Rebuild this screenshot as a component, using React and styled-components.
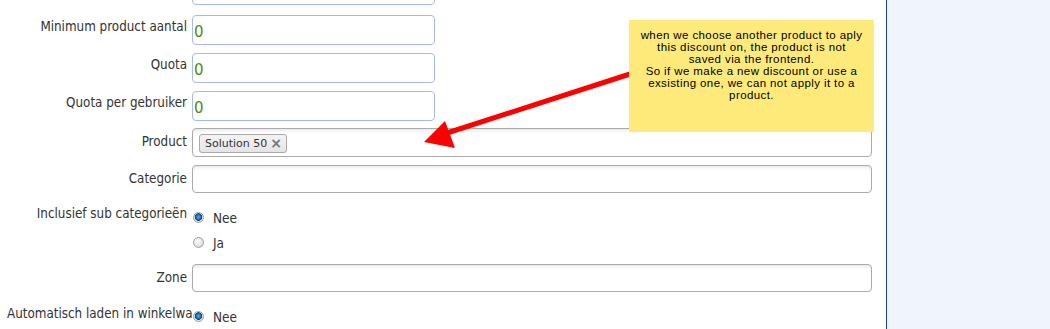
import React from "react";
import styled, { createGlobalStyle } from "styled-components";

const GlobalStyle = createGlobalStyle`
  html, body {
    margin: 0;
    padding: 0;
    background: #f0f4fd;
    overflow: hidden;
  }
  body {
    font-family: "DejaVu Sans Condensed", "DejaVu Sans", sans-serif;
  }
`;

const Page = styled.div`
  display: flex;
  width: 1050px;
  height: 329px;
  overflow: hidden;
  position: relative;
`;

const Main = styled.main`
  width: 886px;
  background: #fff;
  padding-left: 7px;
  box-sizing: border-box;
`;

const Side = styled.aside`
  flex: 1;
  border-left: 1px solid #1c3d99;
  background: #f0f4fd;
`;

const Form = styled.div`
  margin-top: -25px;
`;

const Row = styled.div`
  display: flex;
  align-items: flex-start;
  margin-bottom: ${(p) => p.$gap || 8}px;
`;

const Label = styled.label`
  width: 185px;
  flex: none;
  box-sizing: border-box;
  padding: ${(p) => p.$top || 4}px 5px 0 0;
  text-align: right;
  font-size: 13.3px;
  color: #333;
  white-space: nowrap;
  overflow: hidden;
`;

const Input = styled.div`
  box-sizing: border-box;
  width: ${(p) => (p.$short ? 243 : 680)}px;
  height: ${(p) => p.$h || 28}px;
  border: 1px solid ${(p) => (p.$short ? "#a8b9f0" : "#ababab")};
  border-radius: 4px;
  background: #fff;
  box-shadow: ${(p) => (p.$short ? "none" : "inset 0 3px 4px -2px rgba(0,0,0,0.12)")};
  display: flex;
  align-items: center;
  padding: 4px 5px 0 1px;
  font-family: "DejaVu Sans", sans-serif;
  font-size: 15px;
  color: #4f8a10;
`;

const Tag = styled.span`
  display: inline-flex;
  align-items: center;
  gap: 3px;
  margin: -3px 0 0 5px;
  height: 19px;
  padding: 0 4px 0 5px;
  box-sizing: border-box;
  border: 1px solid #aaa;
  border-radius: 3px;
  background: linear-gradient(#f4f4f4, #e4e4e4);
  font-size: 11px;
  color: #333;
`;

const Close = styled.span`
  font-size: 14px;
  font-weight: bold;
  color: #777;
`;

const Options = styled.div`
  display: flex;
  flex-direction: column;
  padding-top: ${(p) => p.$top || 0}px;
`;

const Option = styled.div`
  display: flex;
  align-items: center;
  height: 25px;
  gap: 9px;
  padding-left: 1px;
  font-size: 13.5px;
  color: #333;
`;

const Radio = styled.span`
  width: 11px;
  height: 11px;
  box-sizing: border-box;
  border-radius: 50%;
  border: 1px solid #a0a0a0;
  background: ${(p) =>
    p.$on
      ? "radial-gradient(circle at 50% 45%, #4bb0e8 0, #1a6fb0 2.5px, #0d3f6e 3.5px, #dcdcdc 4px, #f4f4f4 100%)"
      : "radial-gradient(circle at 40% 35%, #ffffff 0, #dedede 70%, #c8c8c8 100%)"};
`;

const Note = styled.div`
  position: absolute;
  left: 629px;
  top: 20px;
  width: 245px;
  height: 112px;
  box-sizing: border-box;
  padding-top: 9px;
  background: #fdea7b;
  font-family: "Liberation Sans", Arial, sans-serif;
  font-size: 11.5px;
  line-height: 12px;
  text-align: center;
  color: #000;
  letter-spacing: 0.4px;
`;

const Arrow = styled.svg`
  position: absolute;
  left: 0;
  top: 0;
  pointer-events: none;
`;

const radio = (label, on) => (
  <Option>
    <Radio $on={on} />
    {label}
  </Option>
);

export default function App() {
  return (
    <>
      <GlobalStyle />
      <Page>
        <Main>
          <Form>
            <Row $gap={10}>
              <Label />
              <Input $short $h={30} />
            </Row>
            <Row>
              <Label>Minimum product aantal</Label>
              <Input $short $h={30}>0</Input>
            </Row>
            <Row>
              <Label>Quota</Label>
              <Input $short $h={30}>0</Input>
            </Row>
            <Row $gap={7}>
              <Label>Quota per gebruiker</Label>
              <Input $short $h={30}>0</Input>
            </Row>
            <Row>
              <Label $top={6}>Product</Label>
              <Input $h={29}>
                <Tag>
                  Solution 50 <Close>×</Close>
                </Tag>
              </Input>
            </Row>
            <Row>
              <Label $top={6}>Categorie</Label>
              <Input />
            </Row>
            <Row $gap={9}>
              <Label $top={5}>Inclusief sub categorieën</Label>
              <Options $top={4}>
                {radio("Nee", true)}
                {radio("Ja", false)}
              </Options>
            </Row>
            <Row $gap={9}>
              <Label $top={6}>Zone</Label>
              <Input />
            </Row>
            <Row>
              <Label $top={5}>Automatisch laden in winkelwagen</Label>
              <Options $top={3}>{radio("Nee", true)}</Options>
            </Row>
          </Form>
        </Main>
        <Side />
        <Arrow width="1050" height="329" viewBox="0 0 1050 329">
          <line x1="630" y1="74" x2="447" y2="133" stroke="#ff0000" strokeWidth="5" />
          <polygon points="424,142 445,121 455,148" fill="#ff0000" />
        </Arrow>
        <Note>
          when we choose another product to aply
          <br />
          this discount on, the product is not
          <br />
          saved via the frontend.
          <br />
          So if we make a new discount or use a
          <br />
          exsisting one, we can not apply it to a
          <br />
          product.
        </Note>
      </Page>
    </>
  );
}
